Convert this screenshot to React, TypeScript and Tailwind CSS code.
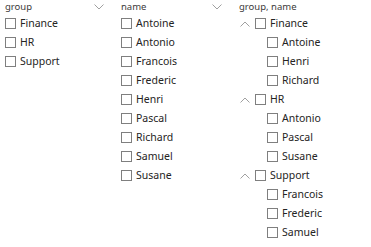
import React from "react";

const groups = [
  { name: "Finance", members: ["Antoine", "Henri", "Richard"] },
  { name: "HR", members: ["Antonio", "Pascal", "Susane"] },
  { name: "Support", members: ["Francois", "Frederic", "Samuel"] },
];

const names = ["Antoine", "Antonio", "Francois", "Frederic", "Henri", "Pascal", "Richard", "Samuel", "Susane"];

function Box() {
  return <span className="block w-[11px] h-[11px] shrink-0 border border-[#7f7f7f] bg-white" />;
}

function ChevronDown() {
  return (
    <svg width="10" height="6" viewBox="0 0 10 6" className="shrink-0">
      <path d="M0.5 0.5 L5 5 L9.5 0.5" fill="none" stroke="#a0a0a0" strokeWidth="1" />
    </svg>
  );
}

function ChevronUp() {
  return (
    <svg width="10" height="6" viewBox="0 0 10 6" className="shrink-0">
      <path d="M0.5 5.5 L5 1 L9.5 5.5" fill="none" stroke="#a0a0a0" strokeWidth="1" />
    </svg>
  );
}

function Item({ label }: { label: string }) {
  return (
    <div className="flex items-center gap-[4px] h-[19px]">
      <Box />
      <span className="text-[10.5px] text-[#252423] leading-none">{label}</span>
    </div>
  );
}

function Header({ title, chevron }: { title: string; chevron?: boolean }) {
  return (
    <div className="flex items-center justify-between h-[14px] pr-[12px]">
      <span className="text-[9.5px] text-[#3b3a39] leading-none">{title}</span>
      {chevron ? <ChevronDown /> : null}
    </div>
  );
}

export default function App() {
  return (
    <div
      className="w-[371px] h-[247px] bg-white flex overflow-hidden"
      style={{ fontFamily: '"Noto Sans", "Open Sans", sans-serif' }}
    >
      <div className="w-[116px] pl-[5px]">
        <Header title="group" chevron />
        {groups.map((g) => (
          <Item key={g.name} label={g.name} />
        ))}
      </div>

      <div className="w-[118px] pl-[5px]">
        <Header title="name" chevron />
        {names.map((n) => (
          <Item key={n} label={n} />
        ))}
      </div>

      <div className="flex-1 pl-[5px]">
        <Header title="group, name" />
        {groups.map((g) => (
          <div key={g.name}>
            <div className="flex items-center h-[19px] pl-[1px]">
              <span className="w-[15px] flex items-center">
                <ChevronUp />
              </span>
              <div className="flex items-center gap-[4px]">
                <Box />
                <span className="text-[10.5px] text-[#252423] leading-none">{g.name}</span>
              </div>
            </div>
            <div className="pl-[28px]">
              {g.members.map((m) => (
                <Item key={m} label={m} />
              ))}
            </div>
          </div>
        ))}
      </div>
    </div>
  );
}
